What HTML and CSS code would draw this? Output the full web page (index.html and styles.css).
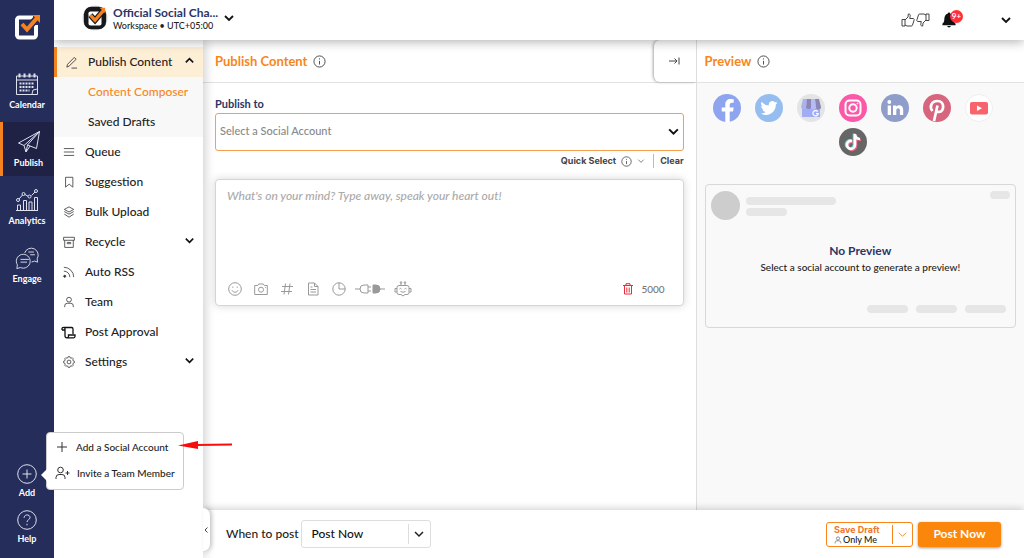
FILE: index.html
```html
<!DOCTYPE html>
<html lang="en">
<head>
<meta charset="utf-8">
<meta name="viewport" content="width=device-width, initial-scale=1">
<title>Publish Content</title>
<link rel="stylesheet" href="styles.css">
</head>
<body>
<svg class="sprite" aria-hidden="true">
  <symbol id="down" viewBox="0 0 12 12"><path d="M2 4l4 4 4-4"/></symbol>
  <symbol id="up" viewBox="0 0 12 12"><path d="M2 8l4-4 4 4"/></symbol>
  <symbol id="info" viewBox="0 0 14 14"><circle cx="7" cy="7" r="6"/><path d="M7 6.300v4M7 3.600v1.200"/></symbol>
  <symbol id="person" viewBox="0 0 14 14"><circle cx="7" cy="4.300" r="2.800"/><path d="M2 13v-1.500a3 3 0 0 1 3-3h4a3 3 0 0 1 3 3V13"/></symbol>
  <symbol id="thumb" viewBox="0 0 14 14"><path d="M1 6.500h3v6.500H1zM4 7l3-3 .3-3c1.500-.3 2.200.8 1.900 2.200L8.700 5.500h3.400c1 0 1.300.9 1 1.600l-1.600 5c-.2.600-.6.900-1.200.9H6L4 12"/></symbol>
</svg>
<div class="app">
  <nav class="rail" aria-label="Main">
    <a class="logo" href="#" aria-label="Home">
      <svg width="28" height="28" viewBox="0 0 28 28" fill="none"><path d="M20 4.500H7A2.500 2.500 0 0 0 4 7.500v14a2.500 2.500 0 0 0 3 3h13a2.500 2.500 0 0 0 3-3V12" stroke="#fff" stroke-width="4"/><path d="M8.500 10.500l5.500 6L24 5" stroke="#252d5b" stroke-width="7"/><path d="M9 11l5 5.500L24 5" stroke="#f58220" stroke-width="4"/><path d="M19.500 2H27v8z" fill="#f58220"/></svg>
    </a>
    <a class="rail-item" href="#">
      <svg width="24" height="24" viewBox="0 0 24 24"><path d="M1.500 4h21v18.500h-21zM1.500 8h21"/><path d="M4.500 1.500v4M9.500 1.500v4M14.500 1.500v4M19.500 1.500v4" stroke-width="2"/><path class="dots" d="M4.500 11.500h15M4.500 15h15M4.500 18.500h10"/><path d="M17 22l1-4 4.500-1"/></svg>
      <span>Calendar</span>
    </a>
    <a class="rail-item active" href="#">
      <svg width="24" height="24" viewBox="0 0 24 24"><path d="M22.500 1.500L1.500 13l5.500 2.500L22.500 1.500l-3 17-9-3.500-1.500 7-2-6.500M22.500 1.500L10.500 15M9 22l4-6"/></svg>
      <span>Publish</span>
    </a>
    <a class="rail-item" href="#">
      <svg width="24" height="24" viewBox="0 0 24 24"><path d="M1 22.500h22M2.500 22v-5h3v5M8.500 22V12.500h3V22M14 22v-8h3v8M19.500 22V9.500h3V22M4 11l3.500-4M10 6.500l3 1.800M16.500 7.500L20 4"/><circle cx="3" cy="12" r="1.500"/><circle cx="8.500" cy="6" r="1.500"/><circle cx="14.500" cy="8.500" r="1.500"/><circle cx="21" cy="3" r="1.500"/></svg>
      <span>Analytics</span>
    </a>
    <a class="rail-item" href="#">
      <svg width="24" height="24" viewBox="0 0 26 26"><path d="M10.500 7.500a7.500 7.500 0 1 1 13.500 6.300l.5 3.700-3.500-1.200a7 7 0 0 1-3 1"/><path d="M2 24.500l.6-4a7.500 7.500 0 1 1 3.200 2.800zM6 14.500h9M6 17.500h7M14.500 6.500h6M16.500 9.500h5"/></svg>
      <span>Engage</span>
    </a>
    <div class="rail-foot">
      <button class="rail-item" type="button">
        <svg width="20" height="20" viewBox="0 0 20 20"><circle cx="10" cy="10" r="9.300"/><path d="M10 5.500v9M5.500 10h9"/></svg>
        <span>Add</span>
      </button>
      <button class="rail-item" type="button">
        <svg width="20" height="20" viewBox="0 0 20 20"><circle cx="10" cy="10" r="9.300"/><path d="M7 7.800C7.200 4 13 4 13 7.600c0 2-3 2.200-3 4.400M10 13.800v1.500"/></svg>
        <span>Help</span>
      </button>
      <div class="add-menu">
        <button type="button"><svg width="14" height="14" viewBox="0 0 14 14"><path d="M7 2v10M2 7h10"/></svg>Add a Social Account</button>
        <button type="button"><svg width="15" height="14" viewBox="0 0 15 14"><circle cx="5.500" cy="4" r="2.800"/><path d="M1 13v-1.500a3 3 0 0 1 3-3h3a3 3 0 0 1 3 3V13M12.500 5v4M10.500 7h4"/></svg>Invite a Team Member</button>
        <svg class="pointer" width="54" height="10" viewBox="0 0 54 10" aria-hidden="true"><path d="M0 5.500L20 1v8z" fill="#f80d0d"/><path d="M18 5L54 4.500" stroke="#f80d0d" stroke-width="2"/></svg>
      </div>
    </div>
  </nav>

  <div class="body">
    <header class="topbar">
      <button class="workspace" type="button">
        <svg width="26" height="26" viewBox="0 0 28 28" fill="none"><circle cx="14" cy="14" r="13.500" fill="#ddd"/><rect x="2" y="2" width="24" height="24" rx="8" fill="#17181c"/><rect x="7" y="7" width="14" height="15" rx="2" fill="#fff"/><path d="M9 11l5 5.500L23 6" stroke="#17181c" stroke-width="6"/><path d="M9 11l5 5.500L23 6" stroke="#f58220" stroke-width="3.500"/><path d="M19 3h6v6z" fill="#f58220"/></svg>
        <span class="workspace-text"><strong>Official Social Cha...</strong><small>Workspace • UTC+05:00</small></span>
        <svg class="line bold" width="12" height="12"><use href="#down"/></svg>
      </button>
      <div class="top-actions">
        <div class="thumbs">
          <button type="button" aria-label="Like"><svg class="line" width="14" height="14"><use href="#thumb"/></svg></button>
          <button type="button" aria-label="Dislike"><svg class="line flip" width="14" height="14"><use href="#thumb"/></svg></button>
        </div>
        <button class="bell" type="button" aria-label="Notifications">
          <svg width="14" height="16" viewBox="0 0 14 17"><path fill="#111" d="M7 .5c.8 0 1.200.5 1.200 1.200C11 2.500 12 5 12 8c0 2.500 1 3.500 2 4.500V14H0v-1.500C1 11.500 2 10.500 2 8c0-3 1-5.500 3.800-6.300C5.800 1 6.200.5 7 .5zM5 15h4c-.4 2-3.600 2-4 0z"/></svg>
          <span class="badge">9+</span>
        </button>
        <button type="button" aria-label="Account menu"><svg class="line bold" width="12" height="12"><use href="#down"/></svg></button>
      </div>
    </header>

    <div class="content">
      <nav class="side" aria-label="Publish">
        <a class="side-head" href="#"><svg class="line" width="13" height="13" viewBox="0 0 14 14"><path d="M2 12l.7-3L10 1.500l2 2-7.500 7.300zM7 13h6"/></svg>Publish Content<svg class="line bold chev" width="11" height="11"><use href="#up"/></svg></a>
        <div class="side-sub"><a class="current" href="#">Content Composer</a><a href="#">Saved Drafts</a></div>
        <a class="side-link" href="#"><svg class="line" width="12" height="12" viewBox="0 0 14 14"><path d="M1 3h12M1 7h12M1 11h12"/></svg>Queue</a>
        <a class="side-link" href="#"><svg class="line" width="12" height="12" viewBox="0 0 14 14"><path d="M3 1.500h8.500v11.500L7.200 9.500 3 13z"/></svg>Suggestion</a>
        <a class="side-link" href="#"><svg class="line" width="12" height="12" viewBox="0 0 14 14"><path d="M7 1l5.500 3L7 7 1.500 4zM1.500 6.500L7 9.500l5.500-3M1.500 9.500l5.500 3.500 5.500-3.500"/></svg>Bulk Upload</a>
        <a class="side-link" href="#"><svg class="line" width="12" height="12" viewBox="0 0 14 14"><path d="M.7 1.500h12.600V5H.7zM2 5v8.300h10V5M5 7.500h4v1.500H5z"/></svg>Recycle<svg class="line bold chev" width="11" height="11"><use href="#down"/></svg></a>
        <a class="side-link" href="#"><svg class="line" width="12" height="12" viewBox="0 0 14 14"><path d="M1 1.500A11.500 11.500 0 0 1 12.500 13M1 6a7 7 0 0 1 7 7"/><circle cx="2" cy="12" r="1.200" fill="#222"/></svg>Auto RSS</a>
        <a class="side-link" href="#"><svg class="line" width="12" height="12"><use href="#person"/></svg>Team</a>
        <a class="side-link" href="#"><svg class="line scroll" width="15" height="13" viewBox="0 0 15 13"><path d="M3 1.500h7.500a1.500 1.500 0 0 1 1.500 1.500V8M1 4V2.800a1.500 1.500 0 0 1 3 0V10a1.800 1.800 0 0 0 1.800 1.800h6.700A1.500 1.500 0 0 0 14 10.300V9H7.500v1.300a1.500 1.500 0 0 1-1.500 1.500M1 4h3"/></svg>Post Approval</a>
        <a class="side-link" href="#"><svg class="line" width="12" height="12" viewBox="0 0 14 14"><path d="M5.700 2L6 .8h2L8.300 2l1.300.6 1.100-.7 1.400 1.400-.7 1.100.6 1.300 1.200.3v2l-1.200.3-.6 1.300.7 1.100-1.400 1.400-1.100-.7-1.300.6-.3 1.200H6L5.700 12l-1.300-.6-1.100.7-1.400-1.400.7-1.100L2 8.300.8 8V6L2 5.700l.6-1.300-.7-1.100 1.400-1.400 1.100.7z"/><circle cx="7" cy="7" r="2.200"/></svg>Settings<svg class="line bold chev" width="11" height="11"><use href="#down"/></svg></a>
        <button class="side-toggle" type="button" aria-label="Collapse menu"><svg class="line" width="6" height="8" viewBox="0 0 6 8"><path d="M4.500 1.500L2 4l2.500 2.500"/></svg></button>
      </nav>

      <div class="work">
        <div class="panels">
          <main class="composer">
            <div class="panel-head">
              <h1>Publish Content</h1><svg class="line" width="13" height="13"><use href="#info"/></svg>
              <button class="hide-preview" type="button" aria-label="Hide preview"><svg class="line" width="13" height="10" viewBox="0 0 13 10"><path d="M1 5h8M6.500 2.500L9 5 6.500 7.500M11 1.500v7"/></svg></button>
            </div>
            <div class="form">
              <label class="form-label" for="account">Publish to</label>
              <div class="select account">
                <select id="account"><option>Select a Social Account</option></select>
                <svg class="line bold" width="13" height="13"><use href="#down"/></svg>
              </div>
              <div class="quick">
                <button type="button">Quick Select <svg class="line" width="11" height="11"><use href="#info"/></svg><svg class="line" width="8" height="8"><use href="#down"/></svg></button>
                <button class="clear" type="button">Clear</button>
              </div>
              <div class="editor">
                <textarea aria-label="Post text" placeholder="What's on your mind? Type away, speak your heart out!"></textarea>
                <div class="tools">
                  <button type="button" aria-label="Emoji"><svg width="14" height="14" viewBox="0 0 14 14"><circle cx="7" cy="7" r="6.300"/><path d="M4 8.300c1 2.500 5 2.500 6 0M4.800 4.500v1.300M9.200 4.500v1.300"/></svg></button>
                  <button type="button" aria-label="Photo"><svg width="14" height="14" viewBox="0 0 14 14"><path d="M.7 3.500h3L4.700 2h4.600l1 1.500h3v9H.7z"/><circle cx="7" cy="7.700" r="2.500"/><path d="M11 5.500h.8"/></svg></button>
                  <button type="button" aria-label="Hashtag"><svg width="14" height="14" viewBox="0 0 14 14"><path d="M5.500 1.500L4 12.500M10 1.500L8.500 12.500M2 4.500h11M1 9.500h11"/></svg></button>
                  <button type="button" aria-label="Document"><svg width="14" height="14" viewBox="0 0 14 14"><path d="M2.500 1h6L12 4.500V13H2.500zM8.500 1v3.500H12M4.500 5h2M4.500 7.500h5.500M4.500 10h5.500"/></svg></button>
                  <button type="button" aria-label="Poll"><svg width="14" height="14" viewBox="0 0 14 14"><path d="M7 .8a6.200 6.200 0 1 0 6.200 6.200A6.200 6.200 0 0 0 7 .8zM7 .8V7h6.200"/></svg></button>
                  <button type="button" aria-label="Integrations"><svg width="30" height="12" viewBox="0 0 30 12"><path d="M0 6h5M13 2v8H9Q5 10 5 6t4-4zM13 4h3M13 8h3M25 6h5"/><path d="M18 2h3q4 0 4 4t-4 4h-3z" fill="#999"/></svg></button>
                  <button type="button" aria-label="Assistant"><svg width="18" height="16" viewBox="0 0 18 16"><path d="M5 4.500h8a2 2 0 0 1 2 2v5a2 2 0 0 1-2 2h-2L9 15l-2-1.500H5a2 2 0 0 1-2-2v-5a2 2 0 0 1 2-2zM3 7.500H1v3.500h2M15 7.500h2v3.500h-2M7 4.500V2M11 4.500V2M5.500 8q1-1.200 2 0M10.500 8q1-1.200 2 0M6.500 10.500q2.500 1.500 5 0"/><circle cx="7" cy="1.500" r=".8"/><circle cx="11" cy="1.500" r=".8"/></svg></button>
                  <button class="trash" type="button" aria-label="Discard"><svg width="10" height="12" viewBox="0 0 10 12"><path d="M0 2.500h10M3 2.500V.7h4v1.800M1.500 3v8h7V3M3.800 4.500v5M6.200 4.500v5"/></svg></button>
                  <output>5000</output>
                </div>
              </div>
            </div>
          </main>

          <aside class="preview">
            <div class="panel-head"><h2>Preview</h2><svg class="line" width="13" height="13"><use href="#info"/></svg></div>
            <div class="preview-body">
              <div class="networks">
                <button type="button" aria-label="Facebook"><svg viewBox="0 0 28 28"><circle cx="14" cy="14" r="14" fill="#8fa4ef"/><path d="M12.300 28V17.500H8.700v-4h3.600v-3c0-3.600 2.100-5.500 5.400-5.500 1.500 0 3 .3 3 .3v3.400H19c-1.700 0-2.300 1-2.300 2.200v2.600h4l-.7 4h-3.300V28z" fill="#fff"/></svg></button>
                <button type="button" aria-label="Twitter"><svg viewBox="0 0 28 28"><circle cx="14" cy="14" r="14" fill="#96bdf0"/><path transform="translate(5.500 5.500) scale(.71)" fill="#fff" d="M23.950 4.600a10 10 0 0 1-2.820.77 4.960 4.960 0 0 0 2.160-2.720c-.95.560-2 .96-3.120 1.180a4.920 4.920 0 0 0-8.380 4.490A13.950 13.950 0 0 1 1.640 3.160a4.920 4.920 0 0 0 1.520 6.570 4.900 4.900 0 0 1-2.230-.61v.06a4.920 4.920 0 0 0 3.950 4.830 5 5 0 0 1-2.210.08 4.940 4.940 0 0 0 4.600 3.420A9.870 9.870 0 0 1 0 19.540a13.990 13.990 0 0 0 7.550 2.210c9.050 0 14-7.500 14-13.980 0-.21 0-.42-.02-.63a9.940 9.940 0 0 0 2.420-2.540z"/></svg></button>
                <button type="button" aria-label="Google Business"><svg viewBox="0 0 28 28"><circle cx="14" cy="14" r="14" fill="#e4e4e4"/><path d="M5 12h18v11H5z" fill="#a0adf5"/><path d="M6 5h4.500L9 12a2.500 2.500 0 0 1-5 1z" fill="#a9b3ec"/><path d="M10 5h4v7a2.500 2.500 0 0 1-5 1z" fill="#8d85b8"/><path d="M14 5h4l1 8a2.500 2.500 0 0 1-5 0z" fill="#b5bcf0"/><path d="M18 5h4l2 8a2.500 2.500 0 0 1-5 0z" fill="#8d85b8"/><path d="M20.700 17.500a2.700 2.700 0 1 0 .6 2.200H19" fill="none" stroke="#fff" stroke-width="1.200"/></svg></button>
                <button type="button" aria-label="Instagram"><svg viewBox="0 0 28 28" stroke="#fff" stroke-width="2"><circle cx="14" cy="14" r="14" fill="#fb58a8" stroke="none"/><rect x="6.500" y="6.500" width="15" height="15" rx="4"/><circle cx="14" cy="14" r="3.700"/><circle cx="18.500" cy="9.500" r=".5" stroke-width="1"/></svg></button>
                <button type="button" aria-label="LinkedIn"><svg viewBox="0 0 28 28"><circle cx="14" cy="14" r="14" fill="#8e9dca"/><circle cx="8.300" cy="8" r="1.900" fill="#fff"/><path fill="#fff" d="M6.700 11.500h3.300V21H6.700zM12 11.500h3.200v1.300c1.800-2.500 7-2 7 3V21h-3.300v-4.500c0-3.300-3.600-3-3.600 0V21H12z"/></svg></button>
                <button type="button" aria-label="Pinterest"><svg viewBox="0 0 28 28"><circle cx="14" cy="14" r="14" fill="#d7657d"/><path d="M9.500 17C6 12.500 8.500 7 14.500 7c7.500 0 7 11 1.500 11-1.500 0-2.500-1-2.500-1M14.500 11.500L11 27" fill="none" stroke="#fff" stroke-width="2.700"/></svg></button>
                <button type="button" aria-label="YouTube"><svg viewBox="0 0 28 28"><circle cx="14" cy="14" r="13.500" fill="#fff" stroke="#eee"/><rect x="5" y="8" width="18" height="12.500" rx="2" fill="#f8646b"/><path d="M12 11.500l5 2.800-5 2.800z" fill="#fff"/></svg></button>
                <button type="button" aria-label="TikTok"><svg viewBox="0 0 28 28" stroke-width="2.600"><circle cx="14" cy="14" r="14" fill="#666"/><path d="M13 13a4 4 0 1 0 3 4V6c0 3 2 5 5 5" stroke="#ef6680" transform="translate(1 1)"/><path d="M12 12.500a4 4 0 1 0 3 4V5.500c0 3 2 5 5 5" stroke="#68e0dc"/><path d="M13 13a4 4 0 1 0 3 4V6c0 3 2 5 5 5" stroke="#fff"/></svg></button>
              </div>
              <section class="card">
                <div class="card-top"><i class="avatar"></i><div class="lines"><i class="pill long"></i><i class="pill"></i></div><i class="pill short"></i></div>
                <div class="card-text"><h3>No Preview</h3><p>Select a social account to generate a preview!</p></div>
                <div class="card-foot"><i class="pill"></i><i class="pill"></i><i class="pill"></i></div>
              </section>
            </div>
          </aside>
        </div>

        <footer class="actions">
          <label for="when">When to post</label>
          <div class="select when">
            <select id="when"><option>Post Now</option></select>
            <svg class="line dark" width="12" height="12"><use href="#down"/></svg>
          </div>
          <div class="split">
            <button class="draft" type="button"><strong>Save Draft</strong><span><svg class="line" width="8" height="8"><use href="#person"/></svg>Only Me</span></button>
            <button class="more" type="button" aria-label="Draft options"><svg width="11" height="11"><use href="#down"/></svg></button>
          </div>
          <button class="post" type="button">Post Now</button>
        </footer>
      </div>
    </div>
  </div>
</div>
</body>
</html>
```
FILE: styles.css
```css
* { box-sizing: border-box; }
body { margin: 0; background: #fff; color: #222; font: 500 12px/16px Lato, "Liberation Sans", sans-serif; }
button, select, textarea { margin: 0; padding: 0; border: 0; background: none; color: inherit; font: inherit; }
a { color: inherit; text-decoration: none; }
h1, h2, h3, p { margin: 0; }
svg { display: block; flex: none; fill: none; }
.sprite { position: absolute; width: 0; height: 0; }
.line { stroke: #444; stroke-width: 1; }
.dark { stroke: #222; stroke-width: 1.5; }
.bold { stroke: #111; stroke-width: 1.8; }
.flip { transform: rotate(180deg); }

.app { display: flex; min-height: 100vh; }
.body { display: flex; flex: 1; flex-direction: column; min-width: 0; }

.rail { position: relative; z-index: 5; display: flex; flex: none; flex-direction: column; width: 54px; background: #252d5b; color: #fff; }
.logo { display: flex; justify-content: center; padding: 13px 0 21px; }
.rail-item { display: flex; flex-direction: column; align-items: center; justify-content: center; gap: 3px; width: 100%; height: 58px; font: 700 9px/12px Lato, sans-serif; }
.rail-item svg { stroke: #dfe1ee; stroke-width: 1; }
.rail-item .dots { stroke-width: 2; stroke-dasharray: 2 1; }
.rail-item.active { height: 54px; margin: 2px 0; border-left: 3px solid #f58220; background: #1f2145; }
.rail-foot { position: relative; margin-top: auto; padding-bottom: 8px; }
.rail-foot .rail-item { height: 46px; }
.add-menu { position: absolute; left: 46px; top: -26px; display: flex; flex-direction: column; width: 138px; padding: 1px 8px 3px; border: 1px solid #ccc; border-radius: 4px; background: #fff; color: #222; }
.add-menu::before { content: ""; position: absolute; left: -6px; top: 36px; border: 6px solid transparent; border-left: 0; border-right-color: #fff; }
.add-menu button { display: flex; align-items: center; gap: 7px; height: 26px; font-size: 10px; white-space: nowrap; }
.add-menu svg { stroke: #333; }
.add-menu .pointer { position: absolute; left: 131px; top: 7px; stroke: none; }

.topbar { position: relative; z-index: 3; display: flex; align-items: center; justify-content: space-between; height: 40px; padding: 0 12px 0 28px; background: #fff; box-shadow: 0 2px 10px rgba(0,0,0,.3); }
.workspace { display: flex; align-items: center; gap: 5px; height: 36px; margin-bottom: 4px; text-align: left; }
.workspace-text { display: flex; flex-direction: column; }
.workspace strong { color: #2c3565; font-weight: 700; line-height: 14px; }
.workspace small { font-size: 9px; line-height: 11px; }
.top-actions, .thumbs { display: flex; align-items: center; }
.thumbs { gap: 1px; margin-right: 12px; }
.bell { position: relative; margin-right: 44px; }
.badge { position: absolute; left: 8px; top: -2px; width: 13px; height: 13px; border-radius: 50%; background: #ff3038; color: #fff; font: 700 8px/13px Lato, sans-serif; text-align: center; }

.content { display: flex; flex: 1; }
.side { position: relative; z-index: 2; flex: none; width: 149px; padding-top: 7px; background: #fff; box-shadow: 2px 0 10px rgba(0,0,0,.2); }
.side-head, .side-link { display: flex; align-items: center; gap: 10px; height: 30px; padding: 0 8px 0 9px; }
.side-head { padding-left: 8px; border-left: 3px solid #f58220; background: #fdeed6; }
.chev { margin: 0 0 4px auto; }
.side-sub { display: flex; flex-direction: column; background: #f8f8f8; }
.side-sub a { height: 30px; padding-left: 34px; line-height: 29px; }
.current { color: #f8861a; }
.scroll { margin: 0 -1px 0 -2px; stroke: #111; stroke-width: 1.3; }
.side-toggle { position: absolute; left: 100%; bottom: 7px; display: flex; align-items: center; width: 7px; height: 43px; border-radius: 0 7px 7px 0; background: #fff; box-shadow: 2px 0 4px rgba(0,0,0,.2); }

.work { display: flex; flex: 1; flex-direction: column; min-width: 0; }
.panels { display: grid; flex: 1; grid-template-columns: 3fr 2fr; }
.composer { min-width: 0; }
.panel-head { display: flex; align-items: center; gap: 6px; height: 43px; padding-left: 12px; border-bottom: 1px solid #e2e2e2; background: #fff; }
.panel-head h1, .panel-head h2 { color: #f8861a; font-size: 13px; font-weight: 700; line-height: 16px; }
.hide-preview { display: flex; align-items: center; align-self: stretch; justify-content: center; width: 42px; margin-left: auto; border-radius: 6px 0 0 6px; box-shadow: -1px 0 3px rgba(0,0,0,.35); }
.form { padding: 13px 12px; }
.form-label { display: block; margin-bottom: 1px; color: #2c3565; font-size: 11px; font-weight: 700; }
.select { display: grid; align-items: center; }
.select > * { grid-area: 1 / 1; }
.select select { width: 100%; height: 100%; appearance: none; outline: 0; }
.select svg { justify-self: end; pointer-events: none; }
.account { height: 38px; padding: 0 3px 2px 4px; border: 1px solid #f5a04e; border-radius: 3px; color: #888; font-size: 11px; }
.quick { display: flex; align-items: center; justify-content: flex-end; gap: 8px; height: 14px; margin: 3px 0 11px; color: #444; font: 700 9px/14px Inter, sans-serif; }
.quick button { display: flex; align-items: center; gap: 5px; }
.quick .clear { padding-left: 6px; border-left: 1px solid #bbb; }
.editor { border: 1px solid #d5d5d5; border-radius: 4px; background: #fff; box-shadow: 0 0 8px rgba(0,0,0,.16); }
textarea { display: block; width: 100%; height: 92px; padding: 8px 11px; resize: none; outline: 0; }
textarea::placeholder { color: #aaa; font-style: italic; }
.tools { display: flex; align-items: center; gap: 12px; height: 33px; padding: 0 18px 0 12px; color: #777; font-size: 10px; }
.tools svg { stroke: #999; stroke-width: 1; }
.tools button + button[aria-label="Integrations"] { margin: 0 -3px; }
.tools .trash { margin-left: auto; }
.tools .trash svg { stroke: #e52e38; }
.tools output { margin-left: -4px; }

.preview { border-left: 1px solid #ddd; background: #f9f9f9; }
.preview .panel-head { padding-left: 8px; }
.preview-body { padding: 11px 8px; }
.networks { display: flex; flex-wrap: wrap; justify-content: center; gap: 6px 14px; padding-right: 14px; }
.networks button, .networks svg { width: 28px; height: 28px; }
.card { margin-top: 28px; padding: 6px 5px 14px; border: 1px solid #d8d8d8; border-radius: 4px; }
.card-top { display: flex; align-items: flex-start; gap: 6px; }
.avatar { width: 29px; height: 29px; border-radius: 50%; background: #cdcdcd; }
.lines { display: flex; flex-direction: column; gap: 3px; padding-top: 6px; }
.pill { width: 41px; height: 8px; border-radius: 4px; background: #e6e6e6; }
.long { width: 90px; }
.short { width: 20px; margin-left: auto; }
.card-text { padding: 23px 0 30px; text-align: center; }
.card-text h3 { color: #2c3565; font-size: 12px; line-height: 16px; }
.card-text p { font-size: 10px; line-height: 16px; }
.card-foot { display: flex; justify-content: flex-end; gap: 8px; padding-right: 4px; }

.actions { position: relative; display: flex; align-items: center; height: 48px; padding: 0 23px; background: #fff; box-shadow: 0 -1px 8px rgba(0,0,0,.2); }
.when { width: 130px; height: 28px; margin-left: 2px; padding: 0 5px 0 10px; border: 1px solid #ddd; border-radius: 3px; color: #111; }
.when::after { content: ""; grid-area: 1 / 1; justify-self: end; width: 1px; height: 20px; margin-right: 16px; background: #ddd; }
.split { display: flex; align-items: center; height: 25px; margin-left: auto; border: 1px solid #f8861a; border-radius: 3px; }
.draft { width: 65px; padding-left: 7px; text-align: left; }
.draft strong { display: block; color: #f0772b; font: 700 9px/11px Inter, sans-serif; white-space: nowrap; }
.draft span { display: flex; gap: 1px; align-items: center; font-size: 9px; line-height: 10px; }
.more { display: flex; align-items: center; justify-content: center; width: 20px; height: 19px; border-left: 1px solid #f8861a; }
.more svg { stroke: #f8861a; }
.post { width: 83px; height: 25px; margin-left: 5px; border-radius: 3px; background: #fa860c; box-shadow: 0 1px 3px rgba(0,0,0,.4); color: #fff; font-weight: 700; }
```
